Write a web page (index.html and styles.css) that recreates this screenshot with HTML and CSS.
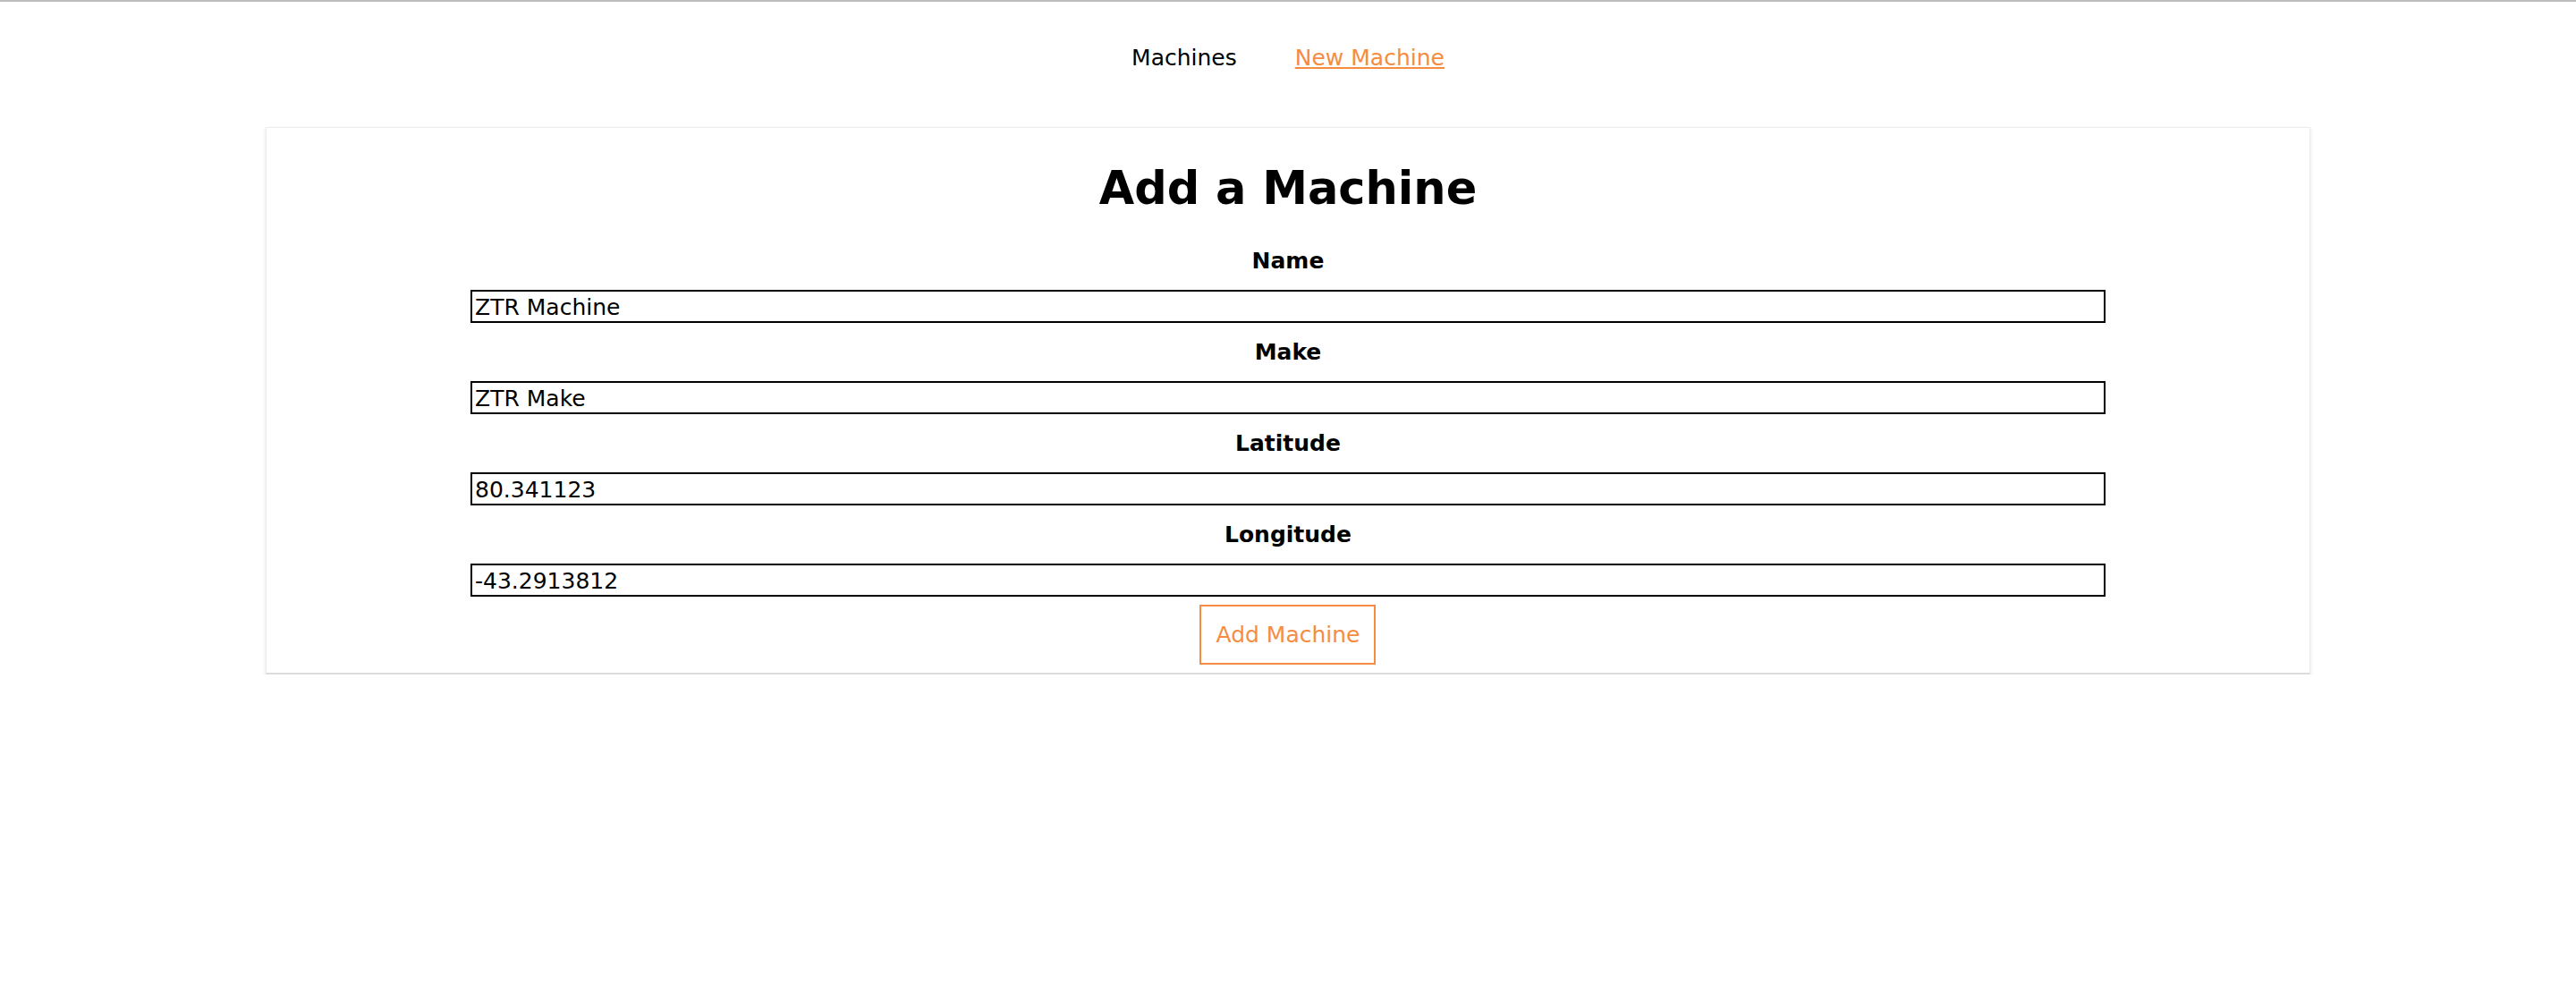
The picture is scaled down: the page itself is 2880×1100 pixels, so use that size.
FILE: index.html
```html
<!DOCTYPE html>
<html>
<head>
<meta charset="utf-8">
<title>Add a Machine</title>
<link rel="stylesheet" href="styles.css">
</head>
<body>
<div class="topline"></div>
<nav class="nav">
  <a class="nav-link" href="#">Machines</a>
  <a class="nav-link active" href="#">New Machine</a>
</nav>
<main class="card">
  <h1 class="title">Add a Machine</h1>
  <form class="form">
    <label class="label" for="name">Name</label>
    <input class="field" id="name" type="text" value="ZTR Machine">
    <label class="label" for="make">Make</label>
    <input class="field" id="make" type="text" value="ZTR Make">
    <label class="label" for="lat">Latitude</label>
    <input class="field" id="lat" type="text" value="80.341123">
    <label class="label" for="lng">Longitude</label>
    <input class="field" id="lng" type="text" value="-43.2913812">
    <button class="submit" type="button">Add Machine</button>
  </form>
</main>
</body>
</html>
```
FILE: styles.css
```css
html, body {
  margin: 0;
  padding: 0;
  background: #ffffff;
}
body {
  font-family: "DejaVu Sans", Verdana, sans-serif;
  font-size: 25px;
  color: #000;
  padding: 0 8px;
}
.topline {
  height: 2px;
  background: #bdbdbd;
  margin: 0 -8px;
}
.nav {
  display: flex;
  justify-content: center;
  gap: 65px;
  margin-top: 48px;
  line-height: 29px;
}
.nav-link {
  color: #000;
  text-decoration: none;
}
.nav-link.active {
  color: #f68c42;
  text-decoration: underline;
}
.card {
  width: 79.85%;
  margin: 63px auto 0;
  background: #fff;
  border: 1px solid #ececec;
  border-bottom: 2px solid #dcdcdc;
  box-shadow: 0 2px 4px rgba(0, 0, 0, 0.12);
  padding: 38px 0 9px;
  box-sizing: border-box;
}
.title {
  margin: 0;
  text-align: center;
  font-size: 51px;
  font-weight: bold;
  line-height: 59px;
}
.form {
  display: flex;
  flex-direction: column;
  align-items: center;
  margin-top: 37px;
}
.label {
  font-weight: bold;
  line-height: 29px;
  margin-bottom: 18px;
}
.field {
  width: 80%;
  box-sizing: border-box;
  height: 37px;
  border: 2px solid #000;
  border-radius: 0;
  padding: 1px 3px 0;
  font-family: "DejaVu Sans", Verdana, sans-serif;
  font-size: 25px;
  color: #000;
  background: #fff;
  margin-bottom: 18px;
  outline: none;
}
.field:last-of-type {
  margin-bottom: 9px;
}
.submit {
  font-family: "DejaVu Sans", Verdana, sans-serif;
  font-size: 25px;
  line-height: 29px;
  color: #f68c42;
  background: #fff;
  border: 2px solid #f68c42;
  border-radius: 0;
  padding: 17px 16px;
}
```
